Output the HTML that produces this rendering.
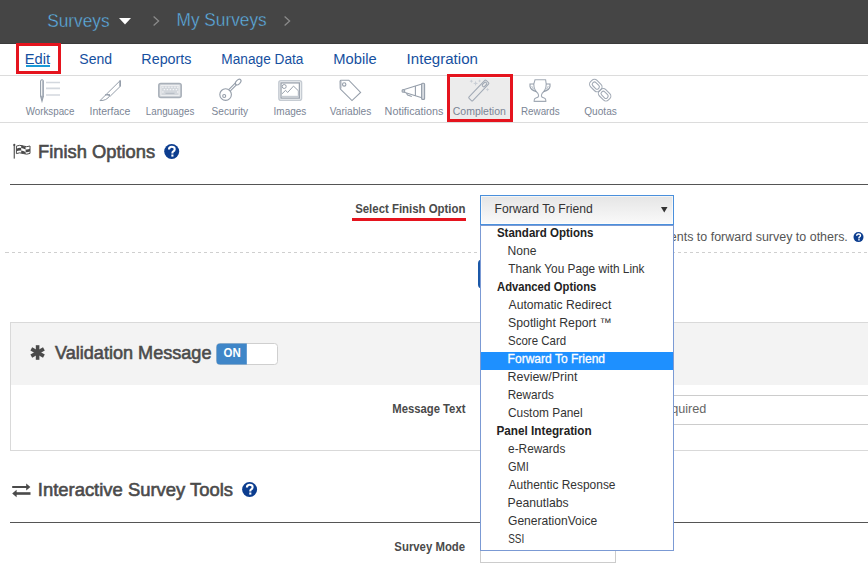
<!DOCTYPE html>
<html><head><meta charset="utf-8"><title>Finish Options</title>
<style>
*{margin:0;padding:0}
html,body{width:868px;height:567px;overflow:hidden;background:#fff}
svg{display:block;font-family:"Liberation Sans",sans-serif}
</style></head><body>
<svg width="868" height="567" viewBox="0 0 868 567">
<rect x="0" y="0" width="868" height="43" fill="#454545"/><rect x="0" y="43" width="868" height="1" fill="#3b3b3b"/>
<text x="47.22" y="27.00" font-size="18.90" textLength="62.38" lengthAdjust="spacingAndGlyphs" fill="#5eb2e8" stroke="#454545" stroke-width="0.4">Surveys</text>
<path d="M119,18 H131 L125,24.5 Z" fill="#fff"/>
<polyline points="153.6,16.5 158.6,21 153.6,25.5" fill="none" stroke="#8a8a8a" stroke-width="1.3"/>
<text x="176.58" y="26.00" font-size="18.90" textLength="90.04" lengthAdjust="spacingAndGlyphs" fill="#5eb2e8" stroke="#454545" stroke-width="0.4">My Surveys</text>
<polyline points="284.6,16.5 289.6,21 284.6,25.5" fill="none" stroke="#8a8a8a" stroke-width="1.3"/>
<rect x="0" y="75" width="868" height="1" fill="#dcdcdc"/>
<text x="24.79" y="64.00" font-size="14.53" textLength="25.33" lengthAdjust="spacingAndGlyphs" fill="#1650a0">Edit</text>
<text x="79.37" y="64.00" font-size="14.53" textLength="32.82" lengthAdjust="spacingAndGlyphs" fill="#1650a0">Send</text>
<text x="141.32" y="64.00" font-size="14.53" textLength="50.17" lengthAdjust="spacingAndGlyphs" fill="#1650a0">Reports</text>
<text x="221.37" y="64.00" font-size="14.53" textLength="82.12" lengthAdjust="spacingAndGlyphs" fill="#1650a0">Manage Data</text>
<text x="333.29" y="64.00" font-size="14.53" textLength="43.35" lengthAdjust="spacingAndGlyphs" fill="#1650a0">Mobile</text>
<text x="406.60" y="64.00" font-size="14.53" textLength="71.35" lengthAdjust="spacingAndGlyphs" fill="#1650a0">Integration</text>
<rect x="26" y="65" width="24" height="2" fill="#1a9ad6"/>
<rect x="17.5" y="44.5" width="42" height="28" fill="none" stroke="#e5141e" stroke-width="3"/>
<rect x="0" y="122" width="868" height="1" fill="#dcdcdc"/>
<rect x="450" y="77" width="60" height="42" fill="#ececec"/><rect x="450" y="77" width="60" height="1" fill="#f6f8f8"/>
<text x="25.65" y="115.00" font-size="11.63" textLength="48.77" lengthAdjust="spacingAndGlyphs" fill="#7b8595">Workspace</text>
<text x="89.53" y="115.00" font-size="11.63" textLength="40.93" lengthAdjust="spacingAndGlyphs" fill="#7b8595">Interface</text>
<text x="145.79" y="115.00" font-size="11.63" textLength="48.55" lengthAdjust="spacingAndGlyphs" fill="#7b8595">Languages</text>
<text x="211.55" y="115.00" font-size="11.63" textLength="36.48" lengthAdjust="spacingAndGlyphs" fill="#7b8595">Security</text>
<text x="273.58" y="115.00" font-size="11.63" textLength="32.77" lengthAdjust="spacingAndGlyphs" fill="#7b8595">Images</text>
<text x="329.75" y="115.00" font-size="11.63" textLength="41.60" lengthAdjust="spacingAndGlyphs" fill="#7b8595">Variables</text>
<text x="384.61" y="115.00" font-size="11.63" textLength="58.76" lengthAdjust="spacingAndGlyphs" fill="#7b8595">Notifications</text>
<text x="452.78" y="115.00" font-size="11.63" textLength="53.09" lengthAdjust="spacingAndGlyphs" fill="#7b8595">Completion</text>
<text x="520.99" y="115.00" font-size="11.63" textLength="38.76" lengthAdjust="spacingAndGlyphs" fill="#7b8595">Rewards</text>
<text x="584.22" y="115.00" font-size="11.63" textLength="32.63" lengthAdjust="spacingAndGlyphs" fill="#7b8595">Quotas</text>

 <g fill="none" stroke="#959eaa" stroke-width="1.1">
  <!-- workspace -->
  <path d="M40.6,96.2 V81 Q42,78.6 43.4,81 V96.2 Z"/>
  <rect x="42.2" y="81" width="1.4" height="15.2" fill="#aab1bb" stroke="none"/>
  <path d="M40.6,96.2 L42,101.2 L43.4,96.2" fill="#aab1bb"/>
  <g stroke="#d3d8de" stroke-width="1.6"><path d="M46,82.5 H60 M46,88.4 H60 M46,95 H60"/></g>
  <!-- interface scalpel -->
  <path d="M120.2,80.6 V86.4 L110.4,96 L106.6,94 Z" stroke-width="1"/>
  <path d="M120.2,80.6 V86.4" stroke-width="1.6"/>
  <path d="M105.6,95 L100,100.6 Q106.5,100.8 109.8,95.8" stroke-width="1"/>
  <path d="M105,94.8 H110" stroke-width="1.3"/>
  <!-- security key -->
  <circle cx="225.6" cy="94.6" r="5.8"/>
  <circle cx="224.2" cy="96" r="1.5"/>
  <path d="M229,89.4 L235.2,83.2 M230.4,90.8 L236.4,84.8"/>
  <ellipse cx="238.2" cy="82.1" rx="3.4" ry="2" transform="rotate(-45 238.2 82.1)"/>
  <!-- variables tag -->
  <path d="M340.2,81 Q340.2,80.2 341,80.2 H348.8 L360.6,92.4 L352,100.6 L340.4,89.1 Z"/>
  <path d="M340.6,81 V88.5" stroke-width="1.8" stroke="#aab1bb"/>
  <circle cx="344.2" cy="84.4" r="1.7"/>
  <!-- megaphone -->
  <path d="M404.2,89.6 L421.8,84 M404.2,92.2 L421.8,97.8 M415.4,86.4 V95.8"/>
  <circle cx="403.4" cy="90.9" r="1.4" fill="#c4cad1"/>
  <path d="M406.4,93.3 L407.6,95 L411.8,96.4"/>
  <rect x="421.6" y="83.2" width="3" height="16.2" rx="1" fill="#d6dae0"/>
  <!-- completion wand -->
  <g transform="translate(478.8,90.5) rotate(-46.5)" stroke="#a3abb6">
   <rect x="-12.4" y="-2.6" width="24.8" height="5.2" rx="1"/>
   <rect x="5.8" y="-1.4" width="5" height="2.8" rx="1.2"/>
  </g>
  <g fill="#c9ced5" stroke="none">
   <path d="M471.4,79.4 L472,80.6 L473.2,81.2 L472,81.8 L471.4,83 L470.8,81.8 L469.6,81.2 L470.8,80.6 Z"/>
   <path d="M475.6,80.8 L476.3,82.7 L478.2,83.4 L476.3,84.1 L475.6,86 L474.9,84.1 L473,83.4 L474.9,82.7 Z"/>
   <path d="M479.6,79.3 L480.1,80.4 L481.2,80.9 L480.1,81.4 L479.6,82.5 L479.1,81.4 L478,80.9 L479.1,80.4 Z"/>
   <path d="M487.5,87.8 L488.1,89 L489.3,89.6 L488.1,90.2 L487.5,91.4 L486.9,90.2 L485.7,89.6 L486.9,89 Z"/>
  </g>
  <!-- rewards trophy -->
  <path stroke="#a2aab5" d="M535,79.8 H545.6 L546.2,84 Q546.2,90 542.2,93.2 Q541.4,94.4 541.4,96.2 Q541.6,97.6 544.2,98 Q545.8,98.6 545.8,100.2 V101.4 H534.2 V100.2 Q534.2,98.6 535.8,98 Q538.4,97.6 538.6,96.2 Q538.6,94.4 537.8,93.2 Q533.8,90 533.8,84 Z"/>
  <path d="M534,84 H530 V86.4 Q530.4,90 536.4,91.6 M546,84 H550 V86.4 Q549.6,90 543.6,91.6"/>
  <path d="M531.6,86 Q532.6,89 535.2,89.8 M548.4,86 Q547.4,89 544.8,89.8" stroke="#c4cad1"/>
  <!-- quotas chain -->
  <g transform="translate(595.8,85.6) rotate(45)" stroke="#a3abb6"><rect x="-6.4" y="-4.5" width="12.8" height="9" rx="3.6"/><rect x="-4" y="-2.2" width="8" height="4.4" rx="2"/></g>
  <g transform="translate(604.6,94.8) rotate(45)" stroke="#a3abb6"><rect x="-6.4" y="-4.5" width="12.8" height="9" rx="3.6"/><rect x="-4" y="-2.2" width="8" height="4.4" rx="2"/></g>
 </g>
 <!-- languages keyboard -->
 <rect x="158.8" y="83.6" width="22.4" height="13.8" rx="2" fill="#d3d7dc" stroke="#a9b0b9" stroke-width="1.5"/>
 <rect x="160.9" y="85.6" width="18.2" height="9.8" fill="none" stroke="#f3f4f6" stroke-width="0.8"/>
 <g fill="#f5f6f8">
  <rect x="162.2" y="86.6" width="1.4" height="1.2"/><rect x="165.2" y="86.6" width="1.4" height="1.2"/><rect x="168.2" y="86.6" width="1.4" height="1.2"/><rect x="171.2" y="86.6" width="1.4" height="1.2"/><rect x="174.2" y="86.6" width="1.4" height="1.2"/><rect x="177" y="86.6" width="1.4" height="1.2"/>
  <rect x="163.7" y="89" width="1.4" height="1.2"/><rect x="166.7" y="89" width="1.4" height="1.2"/><rect x="169.7" y="89" width="1.4" height="1.2"/><rect x="172.7" y="89" width="1.4" height="1.2"/><rect x="175.7" y="89" width="1.4" height="1.2"/>
  <rect x="162.2" y="91.4" width="1.4" height="1.2"/><rect x="177" y="91.4" width="1.4" height="1.2"/>
 </g>
 <rect x="165.5" y="92.8" width="9" height="1.2" fill="#b9bfc7"/>
 <!-- images -->
 <rect x="278.9" y="80.8" width="22.6" height="19.4" rx="2" fill="none" stroke="#c6ccd3" stroke-width="1.6"/>
 <rect x="281" y="82.9" width="18.4" height="15.2" fill="none" stroke="#99a1ac" stroke-width="1.3"/>
 <g fill="none" stroke="#99a1ac" stroke-width="1">
  <circle cx="284.2" cy="86.5" r="2"/>
  <path d="M282,93.8 L285.6,90.3 L287.6,92.5 L293.5,86.1 L298.4,90.8"/>
 </g>
 <path d="M282,96.4 H299" stroke="#c6ccd3" stroke-width="1.2"/>
 <rect x="297.8" y="90.6" width="1.4" height="5.2" fill="#b7bec7"/>

<rect x="448.5" y="75.5" width="63" height="45" fill="none" stroke="#e5141e" stroke-width="3"/>
<g>
 <rect x="13.7" y="145" width="1.1" height="13.6" fill="#4a4a4a"/>
 <circle cx="14.3" cy="144.9" r="1.1" fill="#4a4a4a"/>
 <path d="M16.4,146.1 Q19.6,144.6 23.2,146 Q26.8,147.4 30,146 V153.4 Q26.8,154.9 23.2,153.5 Q19.6,152.1 16.4,153.6 Z" fill="#fff" stroke="#4a4a4a" stroke-width="1"/>
 <path d="M21.2,145.3 Q22.3,145.6 23.2,146 Q24.3,146.4 25.6,146.8 V149.4 Q24.3,149 23.2,148.6 Q22.3,148.2 21.2,147.9 Z" fill="#4a4a4a"/>
 <path d="M16.4,148.7 Q18.6,147.7 21.2,147.9 V150.5 Q18.6,150.3 16.4,151.2 Z" fill="#4a4a4a"/>
 <path d="M25.6,149.4 Q27.8,149.8 30,148.7 V151.3 Q27.8,152.4 25.6,152.1 Z" fill="#4a4a4a"/>
 <path d="M21.2,150.5 Q22.3,150.7 23.2,151.1 Q24.3,151.6 25.6,152.1 V153.9 Q24.3,153.8 23.2,153.5 Q22.3,153.1 21.2,152.9 Z" fill="#4a4a4a"/>
</g>

<text x="38.09" y="157.70" font-size="18.02" textLength="117.04" lengthAdjust="spacingAndGlyphs" fill="#4b4b4b" stroke="#4b4b4b" stroke-width="0.6">Finish Options</text>
<g transform="translate(171.7,151.5) scale(1.000)"><circle cx="0" cy="0" r="7.5" fill="#0c3d8f"/><path d="M-2.7,-2 Q-2.7,-4.7 0.1,-4.7 Q3,-4.7 3,-2.3 Q3,-0.8 1.3,0.1 Q0.7,0.5 0.7,1.5 V2" fill="none" stroke="#fff" stroke-width="2.1"/><rect x="-0.35" y="3" width="2.1" height="2.1" fill="#fff"/></g>
<rect x="10" y="184" width="858" height="1" fill="#555"/>
<text x="355.16" y="212.90" font-size="13.52" textLength="110.33" lengthAdjust="spacingAndGlyphs" fill="#4a4a4a" font-weight="bold">Select Finish Option</text>
<rect x="352" y="218" width="114" height="3" fill="#e5141e"/>
<defs><linearGradient id="sg" x1="0" y1="0" x2="0" y2="1"><stop offset="0" stop-color="#e5e5e5"/><stop offset="1" stop-color="#fafafa"/></linearGradient></defs>
<rect x="480.5" y="195.5" width="193" height="29" fill="url(#sg)" stroke="#4a90dc" stroke-width="1"/>
<rect x="481.5" y="196.5" width="191" height="27" fill="none" stroke="#fff" stroke-width="1" opacity="0.6"/>
<text x="494.50" y="212.50" font-size="12.65" textLength="98.27" lengthAdjust="spacingAndGlyphs" fill="#333">Forward To Friend</text>
<path d="M661,207 H667.5 L664.25,212.5 Z" fill="#333"/>
<text x="591.57" y="241.00" font-size="13.08" textLength="256.27" lengthAdjust="spacingAndGlyphs" fill="#555">Allow respondents to forward survey to others.</text>
<g transform="translate(858.5,237.1) scale(0.667)"><circle cx="0" cy="0" r="7.5" fill="#0c3d8f"/><path d="M-2.7,-2 Q-2.7,-4.7 0.1,-4.7 Q3,-4.7 3,-2.3 Q3,-0.8 1.3,0.1 Q0.7,0.5 0.7,1.5 V2" fill="none" stroke="#fff" stroke-width="2.1"/><rect x="-0.35" y="3" width="2.1" height="2.1" fill="#fff"/></g>
<rect x="5" y="252" width="4" height="1" fill="#cfcfcf"/><line x1="12" y1="252.5" x2="868" y2="252.5" stroke="#cfcfcf" stroke-width="1" stroke-dasharray="3,3"/>
<rect x="478" y="259.5" width="90" height="29" rx="4" fill="#1b58a8"/>
<rect x="10.5" y="322.5" width="880" height="128" fill="#fff" stroke="#d9d9d9" stroke-width="1"/>
<rect x="11" y="323" width="857" height="62" fill="#f3f3f3"/>
<g stroke="#4a4a4a" stroke-width="3.6">
 <path d="M37.6,345.2 V359.8"/>
 <path d="M31.3,348.9 L43.9,356.1"/>
 <path d="M31.3,356.1 L43.9,348.9"/>
</g>

<text x="55.01" y="358.70" font-size="18.31" textLength="156.48" lengthAdjust="spacingAndGlyphs" fill="#4b4b4b" stroke="#4b4b4b" stroke-width="0.6">Validation Message</text>
<rect x="216.5" y="343.5" width="61" height="21" rx="3" fill="#fff" stroke="#cfcfcf" stroke-width="1"/>
<path d="M220,343.5 H246.8 V364.5 H220 Q216.5,364.5 216.5,361 V347 Q216.5,343.5 220,343.5 Z" fill="#3f86c8"/>
<text x="223.54" y="356.70" font-size="12.06" textLength="17.24" lengthAdjust="spacingAndGlyphs" fill="#fff" font-weight="bold">ON</text>
<text x="392.24" y="412.80" font-size="12.50" textLength="73.20" lengthAdjust="spacingAndGlyphs" fill="#4a4a4a" font-weight="bold">Message Text</text>
<rect x="480.5" y="395.5" width="400" height="29" fill="#fff" stroke="#cccccc" stroke-width="1"/>
<text x="594.54" y="412.80" font-size="12.65" textLength="111.77" lengthAdjust="spacingAndGlyphs" fill="#666">Response Required</text>
<g fill="#4a4a4a">
 <rect x="12.2" y="486" width="15" height="2"/>
 <path d="M26.2,483.4 L30.4,487 L26.2,490.6 Z"/>
 <rect x="16" y="492.2" width="14.5" height="2.6"/>
 <path d="M16.6,489.8 L12.2,493.5 L16.6,497.2 Z"/>
</g>

<text x="37.80" y="495.80" font-size="18.17" textLength="195.26" lengthAdjust="spacingAndGlyphs" fill="#4b4b4b" stroke="#4b4b4b" stroke-width="0.6">Interactive Survey Tools</text>
<g transform="translate(249.6,489.5) scale(1.000)"><circle cx="0" cy="0" r="7.5" fill="#0c3d8f"/><path d="M-2.7,-2 Q-2.7,-4.7 0.1,-4.7 Q3,-4.7 3,-2.3 Q3,-0.8 1.3,0.1 Q0.7,0.5 0.7,1.5 V2" fill="none" stroke="#fff" stroke-width="2.1"/><rect x="-0.35" y="3" width="2.1" height="2.1" fill="#fff"/></g>
<rect x="10" y="522" width="858" height="1" fill="#555"/>
<text x="394.36" y="550.60" font-size="12.50" textLength="70.73" lengthAdjust="spacingAndGlyphs" fill="#4a4a4a" font-weight="bold">Survey Mode</text>
<rect x="480.5" y="530.5" width="135" height="32" fill="#fff" stroke="#cccccc" stroke-width="1"/>
<rect x="480.5" y="225.5" width="193" height="325" fill="#fff" stroke="#7b9ad4" stroke-width="1"/>
<text x="496.95" y="236.80" font-size="12.79" textLength="96.53" lengthAdjust="spacingAndGlyphs" fill="#222" font-weight="bold">Standard Options</text>
<text x="507.60" y="254.80" font-size="12.35" textLength="28.92" lengthAdjust="spacingAndGlyphs" fill="#333">None</text>
<text x="508.33" y="272.80" font-size="12.35" textLength="136.18" lengthAdjust="spacingAndGlyphs" fill="#333">Thank You Page with Link</text>
<text x="497.02" y="290.80" font-size="12.79" textLength="99.26" lengthAdjust="spacingAndGlyphs" fill="#222" font-weight="bold">Advanced Options</text>
<text x="508.57" y="308.80" font-size="12.35" textLength="102.73" lengthAdjust="spacingAndGlyphs" fill="#333">Automatic Redirect</text>
<text x="508.05" y="326.80" font-size="12.35" textLength="103.72" lengthAdjust="spacingAndGlyphs" fill="#333">Spotlight Report ™</text>
<text x="508.08" y="344.80" font-size="12.35" textLength="58.04" lengthAdjust="spacingAndGlyphs" fill="#333">Score Card</text>
<rect x="481" y="352" width="192" height="18" fill="#1e90ff"/>
<text x="507.61" y="362.80" font-size="12.35" textLength="97.46" lengthAdjust="spacingAndGlyphs" fill="#fff" stroke="#fff" stroke-width="0.3">Forward To Friend</text>
<text x="507.57" y="380.80" font-size="12.35" textLength="69.83" lengthAdjust="spacingAndGlyphs" fill="#333">Review/Print</text>
<text x="507.63" y="398.80" font-size="12.35" textLength="46.29" lengthAdjust="spacingAndGlyphs" fill="#333">Rewards</text>
<text x="508.01" y="416.80" font-size="12.35" textLength="74.58" lengthAdjust="spacingAndGlyphs" fill="#333">Custom Panel</text>
<text x="496.51" y="434.80" font-size="12.79" textLength="95.20" lengthAdjust="spacingAndGlyphs" fill="#222" font-weight="bold">Panel Integration</text>
<text x="508.10" y="452.80" font-size="12.35" textLength="57.22" lengthAdjust="spacingAndGlyphs" fill="#333">e-Rewards</text>
<text x="508.05" y="470.80" font-size="12.35" textLength="20.78" lengthAdjust="spacingAndGlyphs" fill="#333">GMI</text>
<text x="508.57" y="488.80" font-size="12.35" textLength="106.94" lengthAdjust="spacingAndGlyphs" fill="#333">Authentic Response</text>
<text x="507.59" y="506.80" font-size="12.35" textLength="61.02" lengthAdjust="spacingAndGlyphs" fill="#333">Peanutlabs</text>
<text x="508.00" y="524.80" font-size="12.35" textLength="89.24" lengthAdjust="spacingAndGlyphs" fill="#333">GenerationVoice</text>
<text x="508.15" y="542.80" font-size="12.35" textLength="16.06" lengthAdjust="spacingAndGlyphs" fill="#333">SSI</text>
</svg>
</body></html>
